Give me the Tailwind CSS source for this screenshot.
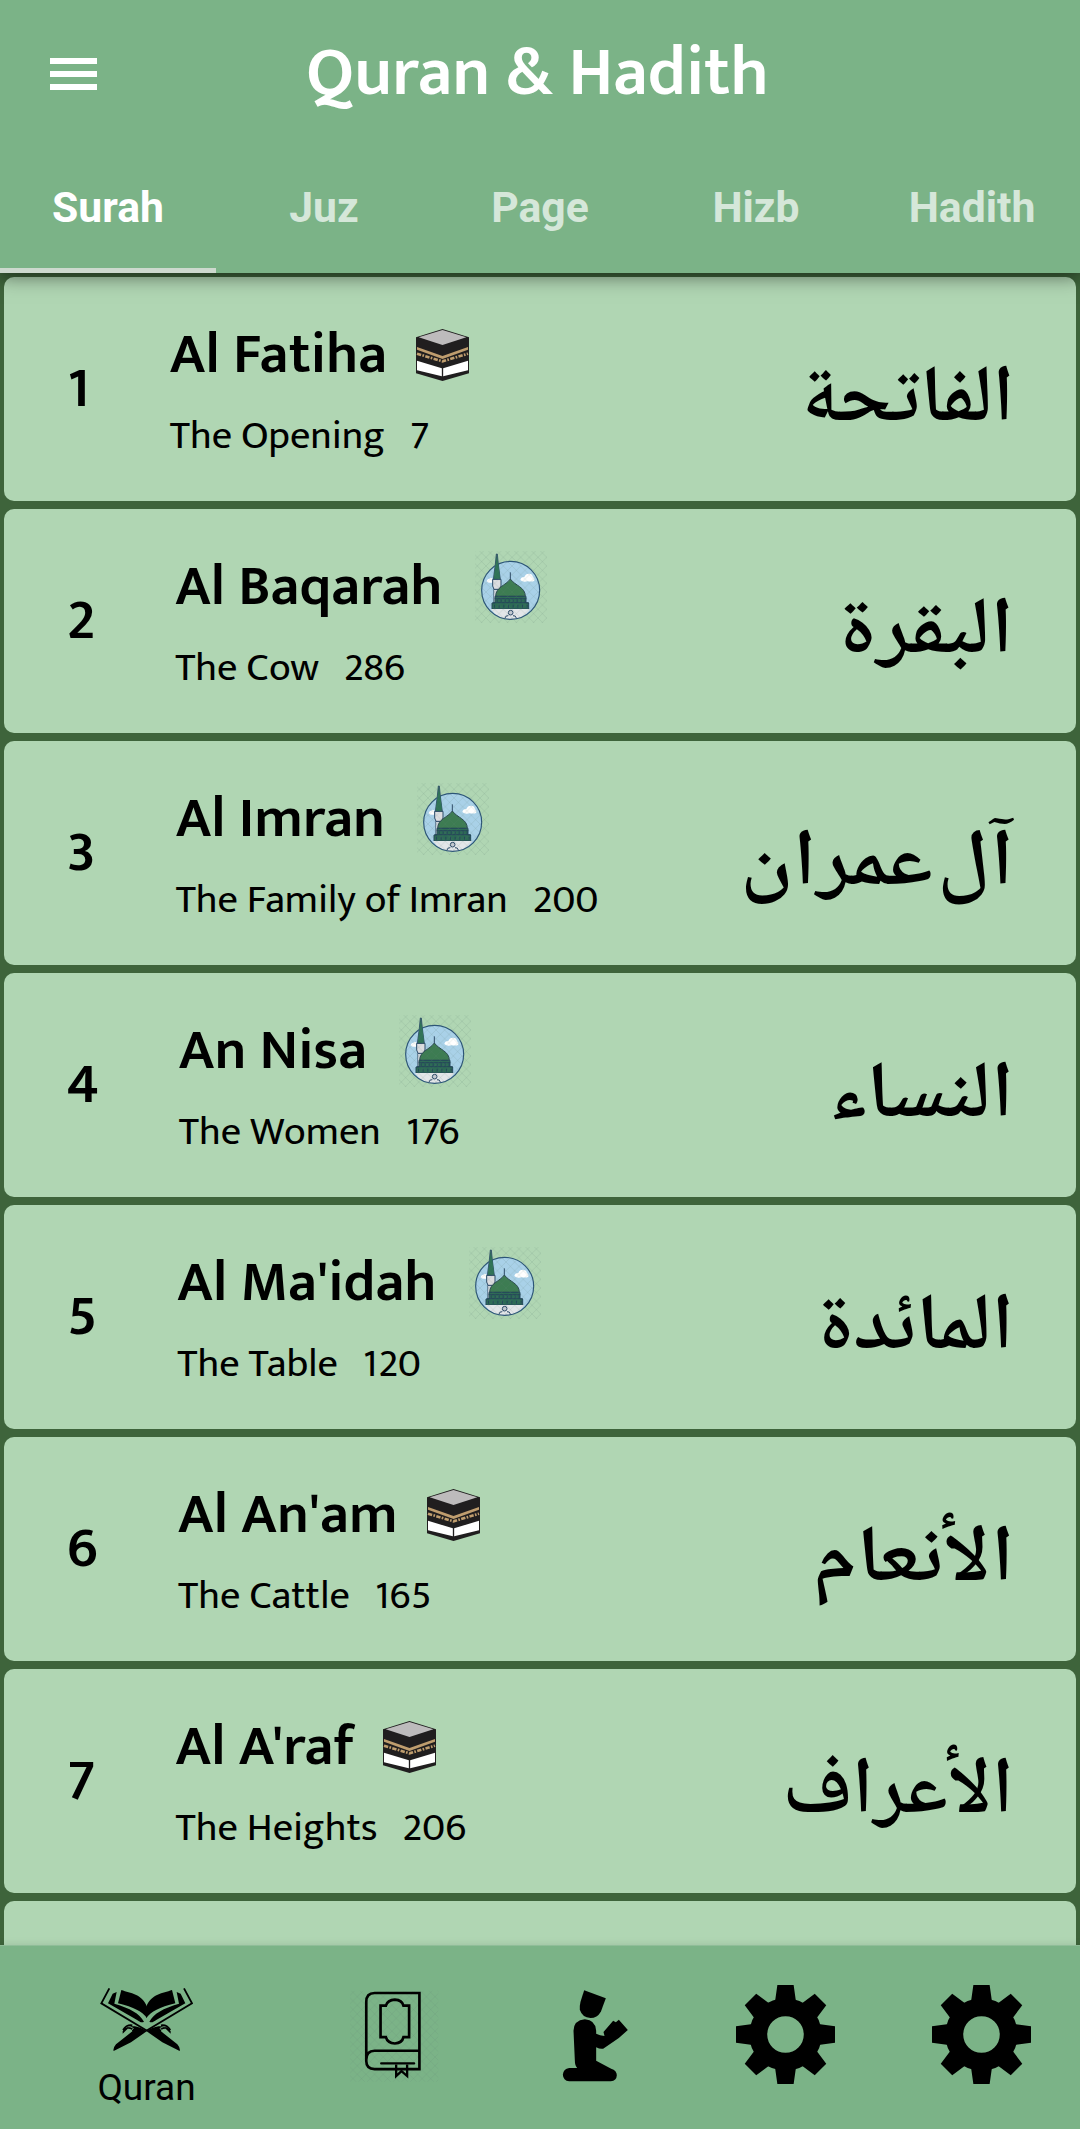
<!DOCTYPE html>
<html lang="en">
<head>
<meta charset="utf-8">
<title>Quran &amp; Hadith</title>
<script src="https://cdn.jsdelivr.net/npm/@tailwindcss/browser@4"></script>
</head>
<body class="w-[1080px] h-[2129px] overflow-hidden flex flex-col bg-[#3e643b] text-black font-['Mukta','Noto_Sans',sans-serif]">

<svg class="absolute w-0 h-0">
  <defs>
    <pattern id="hatch" width="26" height="26" patternUnits="userSpaceOnUse">
      <path d="M0 0L26 26M26 0L0 26" stroke="#5f7f70" stroke-opacity=".22" stroke-width="2"/>
    </pattern>
    <symbol id="kaaba" viewBox="48 57 159 156">
      <path d="M127.500 57L207 82V190L127.500 213L48 190V82Z" fill="#201e1f"/>
      <path d="M127.500 60L199 82L127.500 105L56 82Z" fill="#bdbbbc"/>
      <path d="M51 111L127.500 138L204 111V119L127.500 147L51 119Z" fill="#bf9d6e"/>
      <path d="M51 131L127.500 154L204 131" fill="none" stroke="#bf9d6e" stroke-width="8" stroke-dasharray="13 4 5 4"/>
      <path d="M51 152L125.500 175V199L51 181ZM204 152L129.500 175V199L204 181Z" fill="#fff"/>
    </symbol>
    <symbol id="mosque" viewBox="45 33 216 216">
      <circle cx="152" cy="151" r="87" fill="#a9d1e8"/>
      <path d="M181 120q2-10 12-9q4-11 15-10q10 1 11 11q6 2 4 10q-5 4-20 2q-15 4-22-4zM80 124q1-8 8-8q4-5 9-1v13q-14 2-17-4z" fill="#fff"/>
      <path d="M101 148h18v62h-18z" fill="#d5dbe0" stroke="#2c4a68" stroke-width="2"/>
      <path d="M98 118h25v20l-4 10h-17l-4-10z" fill="#dcdde0" stroke="#2c4a68" stroke-width="3"/>
      <path d="M109 42h3l3 30 6 46h-21l6-46z" fill="#2f7357" stroke="#2c4a68" stroke-width="2.500"/>
      <path d="M151 97v22" stroke="#2c4a68" stroke-width="3"/>
      <path d="M107 169c0-28 30-32 44-52c14 20 45 24 45 52z" fill="#3d7c52" stroke="#2c4a50" stroke-width="3"/>
      <path d="M105 169h93v20h8v18H96v-18h9z" fill="#2d6a55" stroke="#24475a" stroke-width="3"/>
      <path d="M104 176h95M98 188h108" stroke="#24475a" stroke-width="3"/>
      <path d="M102 199h102" stroke="#24475a" stroke-width="9" stroke-dasharray="3 11"/>
      <path d="M110 182h88" stroke="#24475a" stroke-width="8" stroke-dasharray="3 9"/>
      <path d="M93 207h118c-12 19-33 31-59 31s-47-12-59-31z" fill="#e3e6e9"/>
      <path d="M134 236q3-11 11-9M159 227q8-2 11 9" fill="none" stroke="#2c4a68" stroke-width="3"/>
      <circle cx="152" cy="218" r="7" fill="#c3c9d0" stroke="#2c4a68" stroke-width="3"/>
      <circle cx="152" cy="151" r="87" fill="none" stroke="#2c5577" stroke-width="3.500"/>
      <path d="M109 60h3l3 12 5 40h-18l5-40z" fill="#2f7357"/>
      <path d="M45 33h216v216H45z" fill="url(#hatch)"/>
    </symbol>
    <symbol id="gear" viewBox="47.500 44 298 298">
      <g transform="translate(196.500 193)">
        <path id="teeth" d="M-24.500-149h49l7 50h-63zM-24.500 149h49l7-50h-63zM-149-24.500v49l50 7v-63zM149-24.500v49l-50 7v-63z"/>
        <use href="#teeth" transform="rotate(45)"/>
        <circle r="82" fill="none" stroke="#000" stroke-width="54"/>
      </g>
    </symbol>
  </defs>
</svg>

<header class="relative z-10 shrink-0 h-[273px] bg-[#7bb387] text-white shadow-[0_4px_18px_rgba(0,0,0,0.5)]">
  <div class="h-[148px] flex items-center pl-[50px]">
    <div class="w-[47px] flex flex-col gap-[7.5px]">
      <span class="h-[5.500px] bg-white"></span>
      <span class="h-[5.500px] bg-white"></span>
      <span class="h-[5.500px] bg-white"></span>
    </div>
    <h1 class="ml-[209px] whitespace-nowrap text-[69px] leading-[148px] font-semibold">Quran &amp; Hadith</h1>
  </div>
  <nav class="grid grid-cols-5 h-[125px] text-center font-['Roboto',sans-serif] text-[42.700px] leading-[118px] font-bold text-white/70">
    <a class="text-white border-b-[5px] border-[#cdd9ce]">Surah</a>
    <a>Juz</a><a>Page</a><a>Hizb</a><a>Hadith</a>
  </nav>
</header>

<main id="list" class="h-[1672px] shrink-0 overflow-hidden pt-1 px-1 flex flex-col gap-2"></main>

<footer class="relative z-10 shrink-0 h-[184px] bg-[#7bb387] border-t border-[#8fbd98] flex items-start shadow-[0_0_8px_rgba(0,0,0,0.12)]">
  <div class="ml-[96px] w-[101px] pt-[41px] flex flex-col items-center">
    <svg class="w-[93px] h-[65px]" viewBox="63 78 279 195">
      <g id="rehal">
        <path d="M127 87C155 97 188 98 204 137V171C190 152 165 139 117 127Z"/>
        <path d="M113 93L106 128C155 143 180 156 195 182C187 187 182 181 173 176L87 127L101 98Z"/>
        <path d="M91 82L67 127L204 209" fill="none" stroke="#000" stroke-width="5.500"/>
        <path d="M161 196C180 196 190 203 203 211L156 244L104 270Q101 262 111 250L160 211Q159 202 146 203L131 218V210Q140 193 161 196Z"/>
        <path d="M129 210Q142 188 163 202Q158 212 134 219" fill="none" stroke="#7bb387" stroke-width="2.500"/>
        <path d="M132 207Q143 190 160 193" fill="none" stroke="#000" stroke-width="5"/>
      </g>
      <use href="#rehal" transform="matrix(-1 0 0 1 406 0)"/>
    </svg>
    <span class="mt-[6px] font-['Roboto',sans-serif] text-[37px] h-[60px] flex items-center">Quran</span>
  </div>
  <svg class="ml-[151px] mt-[41px] w-[93px] h-[97px]" viewBox="24 50 280 290">
    <path d="M30 60h266v274H30z" fill="url(#hatch)"/>
    <g fill="none" stroke="#000" stroke-width="8">
      <path d="M239 297V67H104Q79 67 79 94V272Q79 296 104 296H243M79 268Q79 241 104 241H239"/>
      <path d="M122 105H138Q143 88 165 87Q187 88 191 105H208V200H191Q187 218 165 219Q143 218 138 200H122Z"/>
      <path d="M124 279H223" stroke-linecap="round" stroke-width="7"/>
      <path d="M169 282V317L185 302L202 317V282" stroke-width="7"/>
    </g>
  </svg>
  <svg class="ml-[121px] mt-[43px] w-[67px] h-[94px]" viewBox="66 56 200 282">
    <path d="M132 60L197 84L182 124Q171 143 151 143Q126 141 119 118Q118 106 121 94Z"/>
    <path d="M100 181Q101 150 134 147Q166 149 168 181V190Q179 195 193 197L190 185L219 151L227 156L236 148L263 179L236 203L189 235Q180 237 168 231V271L213 295Q230 300 230 315Q229 332 212 333H87Q69 330 68 313Q70 295 87 293H111Q104 286 104 270Z"/>
  </svg>
  <svg class="ml-[107px] mt-[39px] w-[99px] h-[99px]"><use href="#gear"/></svg>
  <svg class="ml-[97px] mt-[39px] w-[99px] h-[99px]"><use href="#gear"/></svg>
</footer>

<script>
  const surahs = [
    ['Al Fatiha', 'The Opening', 7, 'kaaba', 'الفاتحة', 1.01],
    ['Al Baqarah', 'The Cow', 286, 'mosque', 'البقرة', 1.09],
    ['Al Imran', 'The Family of Imran', 200, 'mosque', 'آل عمران', 1.10],
    ['An Nisa', 'The Women', 176, 'mosque', 'النساء', 1.06],
    ["Al Ma'idah", 'The Table', 120, 'mosque', 'المائدة', 1.04],
    ["Al An'am", 'The Cattle', 165, 'kaaba', 'الأنعام', 1.10],
    ["Al A'raf", 'The Heights', 206, 'kaaba', 'الأعراف', 1.02],
  ];
  const icons = {
    kaaba: '<svg class="w-[53px] h-[52px] ml-[29px]"><use href="#kaaba"/></svg>',
    mosque: '<svg class="w-[72px] h-[72px] ml-[32px]"><use href="#mosque"/></svg>',
  };
  const card = 'relative shrink-0 h-[224px] rounded-[10px] bg-[#b0d6b3] flex';
  document.getElementById('list').innerHTML = surahs.map(([name, meaning, verses, icon, arabic, stretch], i) => `
    <section class="${card}">
      <span class="ml-[63px] text-[57.700px] leading-[224px] font-semibold">${i + 1}</span>
      <div class="ml-[80px] flex flex-col pt-[42px] whitespace-nowrap">
        <div class="flex items-center h-[72px]"><h2 class="text-[57.700px] leading-[70px] font-semibold">${name}</h2>${icons[icon]}</div>
        <p class="mt-[20px] text-[40.300px] leading-[50px]">${meaning}<span class="ml-[25px]">${verses}</span></p>
      </div>
      <div class="ml-auto mr-[62px] pt-[66px] h-[120px] leading-[120px] whitespace-nowrap text-[80px] font-semibold [word-spacing:-14px] font-['Noto_Naskh_Arabic','Amiri','DejaVu_Sans',serif]" dir="rtl" lang="ar"><span class="inline-block origin-right" style="transform:scaleX(${stretch})">${arabic}</span></div>
    </section>`).join('') + `<section class="${card}"></section>`;
</script>
</body>
</html>
